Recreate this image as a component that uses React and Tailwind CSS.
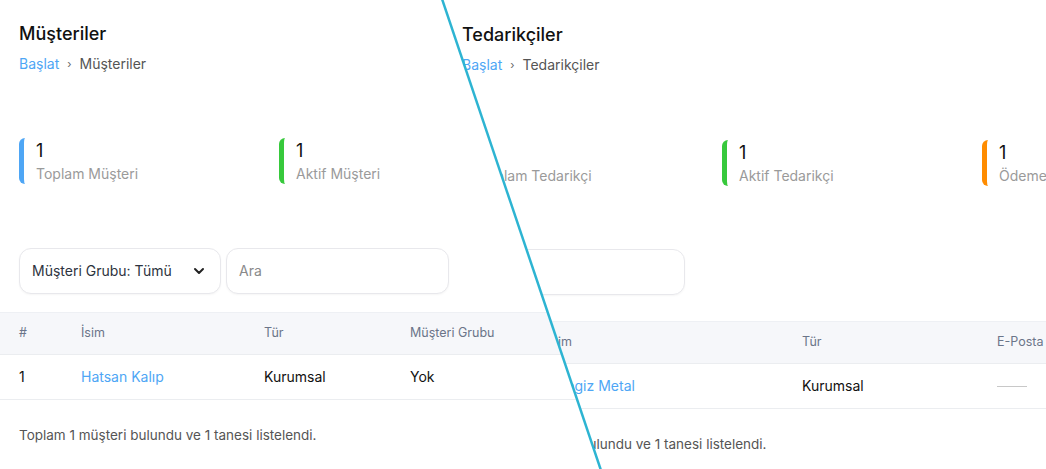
import React from "react";
import { ChevronDown } from "lucide-react";

function Stat({ color, value, label }) {
  return (
    <div className="w-[260px] shrink-0">
      <div className={`flex flex-col rounded-md border-l-[5px] pl-3 ${color}`}>
        <div className="text-lg leading-[26px] text-[#111]">{value}</div>
        <div className="text-sm leading-5 text-[#9a9a9a]">{label}</div>
      </div>
    </div>
  );
}

function Header({ title }) {
  return (
    <>
      <h1 className="text-lg font-medium leading-7 text-[#111]">{title}</h1>
      <div className="mt-1.5 flex items-center text-sm leading-5">
        <span className="text-[#4ea6f5]">Başlat</span>
        <span className="mx-2 text-[11px] text-[#666]">›</span>
        <span className="text-[#555]">{title}</span>
      </div>
    </>
  );
}

function LeftPage() {
  return (
    <div className="w-[1046px] h-[469px] bg-white pt-5">
      <div className="px-[19px]">
        <Header title="Müşteriler" />
        <div className="mt-16 flex">
          <Stat color="border-[#4ea6f5]" value="1" label="Toplam Müşteri" />
          <Stat color="border-[#37c93c]" value="1" label="Aktif Müşteri" />
          <Stat color="border-[#ff8c00]" value="0" label="Pasif Müşteri" />
        </div>
        <div className="mt-16 flex gap-[5px]">
          <div className="flex h-[46px] w-[202px] items-center justify-between rounded-xl border border-[#e8e8ec] bg-white pl-3 pr-[13px] shadow-[0_1px_2px_rgba(0,0,0,0.04)]">
            <span className="text-sm text-[#2d3340]">Müşteri Grubu: Tümü</span>
            <ChevronDown size={16} strokeWidth={3} className="text-[#222]" />
          </div>
          <div className="flex h-[46px] w-[223px] items-center rounded-xl border border-[#e8e8ec] bg-white px-3 shadow-[0_1px_2px_rgba(0,0,0,0.04)]">
            <span className="text-sm text-[#8a8a8a]">Ara</span>
          </div>
        </div>
      </div>
      <div className="mt-[18px]">
        <div className="flex h-[42px] items-center border-t border-[#eef0f4] bg-[#f6f7fa] pl-[19px] text-[12.5px] text-[#6b7589]">
          <div className="w-[62px]">#</div>
          <div className="w-[183px]">İsim</div>
          <div className="w-[146px]">Tür</div>
          <div>Müşteri Grubu</div>
        </div>
        <div className="flex h-[46px] items-center border-y border-[#ebedf0] pl-[19px] text-sm text-[#111]">
          <div className="w-[62px]">1</div>
          <div className="w-[183px] text-[#4ea6f5]">Hatsan Kalıp</div>
          <div className="w-[146px]">Kurumsal</div>
          <div>Yok</div>
        </div>
        <div className="mt-[25px] pl-[19px] text-[13.5px] leading-5 text-[#555]">
          Toplam 1 müşteri bulundu ve 1 tanesi listelendi.
        </div>
      </div>
    </div>
  );
}

function RightPage() {
  return (
    <div className="w-[1046px] h-[469px] bg-white pt-[21px] pl-[443px]">
      <div className="px-[19px]">
        <Header title="Tedarikçiler" />
        <div className="mt-[65px] flex">
          <Stat color="border-[#4ea6f5]" value="1" label="Toplam Tedarikçi" />
          <Stat color="border-[#37c93c]" value="1" label="Aktif Tedarikçi" />
          <Stat color="border-[#ff8c00]" value="1" label="Ödeme Bekleyen" />
        </div>
        <div className="mt-[63px] flex">
          <div className="flex h-[46px] w-[223px] items-center rounded-xl border border-[#e8e8ec] bg-white px-3 shadow-[0_1px_2px_rgba(0,0,0,0.04)]">
            <span className="text-sm text-[#8a8a8a]">Ara</span>
          </div>
        </div>
      </div>
      <div className="mt-[26px]">
        <div className="flex h-[42px] items-center border-t border-[#eef0f4] bg-[#f6f7fa] pl-[19px] text-[12.5px] text-[#6b7589]">
          <div className="w-[86px]">#</div>
          <div className="w-[254px]">İsim</div>
          <div className="w-[195px]">Tür</div>
          <div>E-Posta</div>
        </div>
        <div className="flex h-[46px] items-center border-y border-[#ebedf0] pl-[19px] text-sm text-[#111]">
          <div className="w-[86px]">1</div>
          <div className="w-[254px] text-[#4ea6f5]">Dengiz Metal</div>
          <div className="w-[195px]">Kurumsal</div>
          <div className="h-px w-[30px] bg-[#c8c8c8]" />
        </div>
        <div className="mt-[25px] pl-[19px] text-[13.5px] leading-5 text-[#555]">
          Toplam 1 tedarikçi bulundu ve 1 tanesi listelendi.
        </div>
      </div>
    </div>
  );
}

export default function App() {
  return (
    <div className="relative h-[469px] w-[1046px] overflow-hidden bg-white font-['Inter',sans-serif]">
      <LeftPage />
      <div className="absolute inset-0 [clip-path:polygon(441.7px_0px,1046px_0px,1046px_469px,601.2px_469px)]">
        <RightPage />
      </div>
      <svg className="pointer-events-none absolute inset-0" width="1046" height="469" viewBox="0 0 1046 469">
        <line x1="441.7" y1="-2" x2="601.2" y2="471" stroke="#2db4d2" strokeWidth="2.5" />
      </svg>
    </div>
  );
}
